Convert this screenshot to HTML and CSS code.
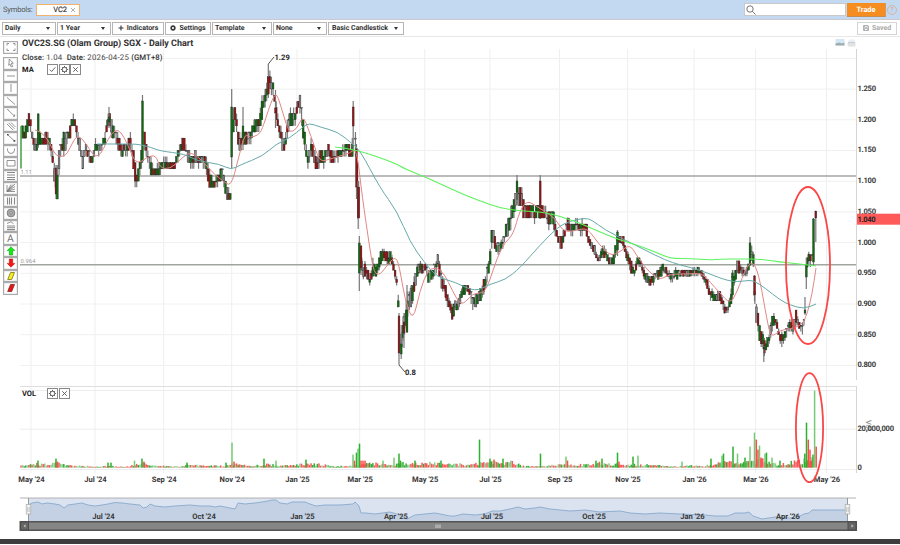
FILE: index.html
```html
<!DOCTYPE html>
<html lang="en">
<head>
<meta charset="utf-8">
<title>OVC2S.SG Daily Chart</title>
<link rel="stylesheet" href="styles.css">
</head>
<body>
<header class="symbols">
  <span class="symbols-label">Symbols:</span>
  <div class="tab">VC2 <svg class="tab-x" viewBox="0 0 6 6"><path d="M1 1l4 4M5 1L1 5"/></svg></div>
  <div class="search"><svg viewBox="0 0 10 10"><circle cx="4" cy="4" r="3.2"/><path d="M6.3 6.3L9.5 9.5"/></svg></div>
  <button class="trade">Trade</button>
  <span class="help">?</span>
</header>
<nav class="toolbar">
  <div class="select w-daily">Daily</div>
  <div class="select w-year">1 Year</div>
  <div class="btn w-ind"><svg class="ico" viewBox="0 0 6 6"><path d="M3 .5v5M.5 3h5"/></svg>Indicators</div>
  <div class="btn w-set"><svg class="ico gear" viewBox="0 0 6 6"><circle cx="3" cy="3" r="1.7"/><path d="M3 0v1M3 5v1M0 3h1M5 3h1M.9.9l.7.7M4.4 4.4l.7.7M5.1.9l-.7.7M1.6 4.4l-.7.7"/></svg>Settings</div>
  <div class="select w-tpl">Template</div>
  <div class="select w-none">None</div>
  <div class="select w-candle">Basic Candlestick</div>
  <div class="btn saved"><svg class="ico disk" viewBox="0 0 6 6"><path d="M.5.5h4.4l.6.6v4.4h-5zM1.5.5v1.8h2.8V.5M1.5 5.5v-2h3v2"/></svg>Saved</div>
</nav>
<main class="workspace">
  <aside class="tools">
    <i class="tool first"><svg viewBox="0 0 12 10"><path d="M2 3.5V1.5h2M8 1.5h2v2M10 6.5v2H8M4 8.5H2v-2"/></svg></i>
    <i class="tool"><svg viewBox="0 0 12 10"><path d="M4.3 1l4 4.2-2 .2L7.6 8.400l-1.300.6L5 6.200 3.800 7.400z"/></svg></i>
    <i class="tool"><svg viewBox="0 0 12 10"><path d="M2 5h8"/></svg></i>
    <i class="tool"><svg viewBox="0 0 12 10"><path d="M6 1v8"/></svg></i>
    <i class="tool"><svg viewBox="0 0 12 10"><path d="M2 1.500l8 7"/></svg></i>
    <i class="tool"><svg viewBox="0 0 12 10"><path d="M2.500 1.500l7 6.500M2.400 1.600h1M9.600 6.500v1.800H8"/></svg></i>
    <i class="tool"><svg viewBox="0 0 12 10"><path d="M2 3l6 6M3.500 1.800l6 6M6 1.500L10.500 6"/></svg></i>
    <i class="tool"><svg viewBox="0 0 12 10"><path d="M2.500 1.500l7 6.500"/><path class="dot" d="M2 1h1.600v1.600H2zM8.500 7h1.800v1.800H8.500z"/></svg></i>
    <i class="tool"><svg viewBox="0 0 12 10"><path d="M2.500 2.500v1.700Q3 7.500 6 7.500T9.500 4.200V2.500"/></svg></i>
    <i class="tool"><svg viewBox="0 0 12 10"><path d="M2 2.500h8v5.500H2z"/></svg></i>
    <i class="tool"><svg viewBox="0 0 12 10"><path class="heavy" d="M2 1.500h8M2 4h8M2 6.500h8M2 8.500h8"/></svg></i>
    <i class="tool"><svg viewBox="0 0 12 10"><path d="M2 8.500L10 1M2 8.500L10 3.500M2 8.500L10 6M2 8.500L6 1.500M2 8.500h8M2 8.500V2M2 8.500L8 1.500"/></svg></i>
    <i class="tool"><svg viewBox="0 0 12 10"><path class="heavy" d="M2.500 1.500v7M4.500 1.500v7M6.500 1.500v7M9.500 1.500v7"/></svg></i>
    <i class="tool"><svg viewBox="0 0 12 10"><circle class="disc" cx="6" cy="5" r="3.900"/><circle class="ring" cx="6" cy="5" r="1.300"/></svg></i>
    <i class="tool"><svg viewBox="0 0 12 10"><path d="M2 2.500L6 .8l2.500 2"/><path class="heavy" d="M2 5h8M2 6.800h8M2 8.600h8"/></svg></i>
    <i class="tool letter">A</i>
    <i class="tool"><svg viewBox="0 0 12 10"><path class="up" d="M6 .8L9.800 4.600H7.700V9H4.300V4.600H2.200z"/></svg></i>
    <i class="tool"><svg viewBox="0 0 12 10"><path class="down" d="M6 9.200L9.800 5.400H7.700V1H4.300V5.400H2.200z"/></svg></i>
    <i class="tool"><svg viewBox="0 0 12 10"><path class="yellow" d="M5.500 1.500h4L6.700 8.500h-4z"/></svg></i>
    <i class="tool"><svg viewBox="0 0 12 10"><path class="red" d="M5.500 1.500h4L6.700 8.500h-4z"/></svg></i>
  </aside>
  <section class="chart">
    <svg id="plot" viewBox="20 36 880 503" width="880" height="503"></svg>
    <div class="legend">
      <h1>OVC2S.SG (Olam Group) SGX - Daily Chart</h1>
      <p class="quote"><b>Close:</b> 1.04 &nbsp;<b>Date:</b> 2026-04-25 <b>(GMT+8)</b></p>
      <div class="study"><span>MA</span>
        <i><svg viewBox="0 0 10 10"><path d="M2 5.200l2 2L8.200 2.500"/></svg></i><i><svg viewBox="0 0 10 10"><circle cx="5" cy="5" r="2.500"/><path d="M5 1v1.500M5 7.500V9M1 5h1.500M7.500 5H9M2.200 2.200l1 1M6.800 6.800l1 1M7.800 2.200l-1 1M3.200 6.800l-1 1"/></svg></i><i><svg viewBox="0 0 10 10"><path d="M2.500 2.500l5 5M7.500 2.500l-5 5"/></svg></i>
      </div>
    </div>
    <div class="study volume"><span>VOL</span>
      <i><svg viewBox="0 0 10 10"><circle cx="5" cy="5" r="2.500"/><path d="M5 1v1.500M5 7.500V9M1 5h1.500M7.500 5H9M2.200 2.200l1 1M6.800 6.800l1 1M7.800 2.200l-1 1M3.200 6.800l-1 1"/></svg></i><i><svg viewBox="0 0 10 10"><path d="M2.500 2.500l5 5M7.500 2.500l-5 5"/></svg></i>
    </div>
  </section>
</main>
<footer class="bottom"></footer>
<script src="chart.js"></script>
</body>
</html>
```
FILE: styles.css
```css
* { box-sizing: border-box; }
body { margin: 0; width: 900px; height: 545px; overflow: hidden; background: #fff; color: #333; font-family: Roboto, "Liberation Sans", sans-serif; font-size: 8px; text-rendering: geometricPrecision; }
svg { fill: none; stroke: currentColor; display: block; }
.symbols { height: 20px; background: #c3d9f1; border-bottom: 1px solid #ccc8cb; display: flex; align-items: center; padding: 0 3px; color: #555; }
.symbols-label { width: 33px; font-size: 7.6px; letter-spacing: -.2px; white-space: nowrap; }
.tab { width: 44px; height: 12px; border: 1px solid #f3b26b; background: #fff; display: flex; align-items: center; justify-content: flex-end; padding-right: 3px; gap: 3px; font-size: 7.5px; color: #333; -webkit-text-stroke: .15px #333; }
.tab-x { width: 6px; height: 6px; color: #999; stroke-width: .8; }
.search { margin-left: auto; width: 102px; height: 13px; background: #fff; border: 1px solid #c9c9c9; padding: 1px; }
.search svg { width: 10px; height: 10px; color: #666; stroke-width: .9; }
.trade { width: 39px; height: 14px; margin-left: 1px; border: 0; padding: 0; background: #f68d20; color: #fff; font: bold 7.4px Roboto, sans-serif; border-bottom: 1px solid #c98c50; border-right: 1px solid #d49a60; text-rendering: geometricPrecision; }
.help { width: 10px; height: 10px; border: 1px solid #d6b79d; border-radius: 50%; margin-left: 1px; color: #cfae94; font-size: 7px; line-height: 8px; text-align: center; }
.toolbar { height: 17px; border-bottom: 1px solid #e8e8e8; display: flex; align-items: center; gap: 1px; padding: 0 3px 0 2px; font-weight: bold; font-size: 7px; color: #333; }
.select, .btn { height: 13px; border: 1px solid #b5b5b5; background: #fff; display: flex; align-items: center; white-space: nowrap; }
.select { justify-content: space-between; padding: 0 5px 0 2px; }
.select::after { content: ""; border: 2.3px solid transparent; border-top: 3px solid #333; border-bottom: 0; }
.btn { justify-content: center; gap: 3px; }
.ico { width: 6px; height: 6px; stroke-width: 1.1; }
.gear { stroke-width: 1.2; }
.disk { stroke-width: .9; }
.w-daily { width: 54px; }
.w-year { width: 54px; }
.w-ind { width: 52px; }
.w-set { width: 46px; }
.w-tpl { width: 60px; }
.w-none { width: 54px; }
.w-candle { width: 76px; padding-left: 3px; }
.saved { margin-left: auto; width: 40px; border-color: #d5d5d5; color: #aaa; }
.workspace { display: grid; grid-template-columns: 20px 880px; height: 502px; }
.tools { padding: 4px 0 0 3px; display: flex; flex-direction: column; color: #777; }
.tool { flex: none; width: 15px; height: 12.5px; border: 1px solid #aaa; padding: .5px; background: #fff; display: flex; justify-content: center; align-items: center; box-shadow: inset 0 0 0 .5px #ddd; }
.tool svg { width: 12px; height: 10px; stroke-width: .8; }
.first { margin-bottom: 3.5px; }
.heavy { stroke-width: 1.1; stroke: #888; }
.dot { fill: #555; stroke: none; }
.disc { fill: #aaa; }
.ring { fill: #ddd; }
.letter { font: normal 10.5px/11px Roboto, sans-serif; }
.up { fill: #0df20d; stroke: #177b17; stroke-width: .5; }
.down { fill: #f11; stroke: #911; stroke-width: .5; }
.yellow { fill: #f6ee22; stroke: #77731c; }
.red { fill: #e51616; stroke: #872525; }
.chart { position: relative; height: 502px; }
#plot { margin-top: -1px; stroke: none; overflow: visible; }
.legend { position: absolute; left: 2px; top: 1px; }
h1 { margin: 0; font-size: 9px; line-height: 13px; font-weight: bold; white-space: nowrap; color: #333; }
.quote { margin: 1.5px 0 0; font-size: 7.8px; line-height: 10px; color: #444; white-space: nowrap; letter-spacing: .24px; }
.quote b { font-weight: 500; letter-spacing: .05px; color: #333; }
.study { display: flex; align-items: center; height: 11px; margin-top: 1.5px; font-weight: bold; font-size: 7.5px; color: #222; }
.study span { width: 25px; }
.study i { width: 11px; height: 11px; border: 1px solid #888; margin-right: .5px; background: #fff; color: #555; }
.study svg { width: 9px; height: 9px; stroke-width: 1; }
.volume { position: absolute; left: 2px; top: 349.5px; }
.axis { font: bold 7.6px Roboto, sans-serif; fill: #383838; }
.level { font: 5.8px Roboto, sans-serif; fill: #999; }
.callout { font: bold 7.6px Roboto, sans-serif; fill: #222; }
.voltitle { font: 7.5px Roboto, sans-serif; fill: #888; }
.bottom { height: 5px; background: #3d3d3d; position: relative; }
```
FILE: chart.js
```js
const out = [];
const put = s => out.push(s);
const line = (x1, y1, x2, y2, c, w = 1) =>
  put(`<line x1="${x1}" y1="${y1}" x2="${x2}" y2="${y2}" stroke="${c}" stroke-width="${w}"/>`);
const rect = (x, y, w, h, c, extra = '') =>
  put(`<rect x="${x}" y="${y}" width="${w}" height="${h}" fill="${c}" ${extra}/>`);
const text = (x, y, s, cls, anchor = 'start', len = 0) =>
  put(`<text x="${x}" y="${y}" class="${cls}" text-anchor="${anchor}"${len ? ` textLength="${len}"` : ''}>${s}</text>`);
const pairs = s => s.split(' ').map(p => p.split(',').map(Number));
let seed = 4711;
const rnd = () => (seed = (seed * 16807) % 2147483647) / 2147483647;
function at(list, x, k) {
  for (let i = 1; i < list.length; i++) {
    if (x <= list[i][0]) {
      const a = list[i - 1], b = list[i];
      return a[k] + (b[k] - a[k]) * (x - a[0]) / ((b[0] - a[0]) || 1);
    }
  }
  return list[list.length - 1][k];
}

// grid
const months = [[31, "May '24"], [95, "Jul '24"], [163.7, "Sep '24"], [231.7, "Nov '24"], [297, "Jan '25"], [359.7, "Mar '25"], [424.7, "May '25"], [490, "Jul '25"], [559.5, "Sep '25"], [627.5, "Nov '25"], [694, "Jan '26"], [755.5, "Mar '26"], [826.5, "May '26"]];
months.forEach(([x]) => line(x, 49, x, 473, '#efefef'));
for (let i = 0; i <= 10; i++) line(20, 58.4 + i * 30.7, 856, 58.4 + i * 30.7, '#f0f0f0');
[390.5, 429.2, 469.5].forEach(y => line(20, y, 856, y, '#ededed'));
line(20, 386.5, 856, 386.5, '#dedede');
line(856.5, 49, 856.5, 380, '#d5d5d5');
line(856.5, 386, 856.5, 473, '#d5d5d5');

// horizontal levels
line(20, 176, 856, 176, '#a5a5a5', 1.5);
line(20, 264.7, 856, 264.7, '#a0a5a0', 1.5);
text(20.5, 174.2, '1.11', 'level');
text(20.5, 263, '0.964', 'level', 'start', 15);

// moving range of the candles: x, high, low
const range = pairs('22,126,143 25,125,144 27,113,138 29,113,128 31,113,133 33,138,150 37,138,150 40,125,144 42,138,148 46,130,147 50,135,150 52,145,165 54,160,178 56,175,199 58,150,190 60,145,165 62,135,155 65,130,156 68,131,140 70,122,138 73,113,127 75,118,132 78,132,148 81,145,158 83,155,169 86,144,155 90,150,163 92,157,168 95,138,152 98,142,156 101,143,153 104,135,148 107,120,135 109,107,125 111,120,137 115,125,142 118,133,150 122,143,155 126,143,155 130,132,153 133,145,165 135,155,186 137,173,187 139,165,178 141,155,178 143,118,160 144,130,147 147,145,160 150,155,173 152,163,180 155,166,180 160,160,175 165,155,170 170,160,172 175,158,170 180,143,156 184,138,150 188,150,164 192,153,168 195,150,168 200,155,168 205,155,167 209,162,188 211,175,193 215,178,190 220,170,185 222,168,182 225,177,195 228,188,202 231,190,205 232,108,150 234,107,130 236,105,128 238,128,148 241,138,155 243,125,150 246,130,146 250,130,146 254,120,136 258,118,135 260,110,132 262,95,122 265,90,108 267,78,100 269,68,87 271,76,96 273,80,95 275,90,108 277,110,128 279,120,136 282,130,148 285,140,155 287,118,140 290,108,130 292,107,126 295,110,126 297,98,116 299,94,112 301,98,125 303,115,140 306,138,162 308,153,173 311,140,158 313,142,165 316,155,169 318,153,173 320,150,165 324,153,166 328,141,157 332,150,166 336,150,163 340,149,160 344,142,156 348,142,156 352,150,162 353,104,145 355,120,152 357,147,190 358.700,180,225 359.500,240,280 361,245,272 363,267,282 365,260,280 368,266,282 370,273,288 373,258,280 376,265,280 379,255,271 382,246,263 385,246,262 388,251,267 391,249,260 393,258,272 396,272,285 397.800,280,289 399,316,352 401,332,356 403,313,345 405,310,342 407,287,325 409,286,310 412,284,310 415,268,290 418,262,276 421,260,275 424,263,275 426,258,272 428,268,284 432,268,281 436,260,275 438,253,266 441,268,289 445,283,297 448,293,310 452,304,321 455,299,313 458,299,311 461,287,303 464,284,298 467,281,293 470,286,299 473,297,311 478,290,305 482,285,300 485,275,291 488,260,280 490,250,272 492,220,252 494,228,246 497,243,258 501,239,252 505,230,245 509,210,236 512,205,226 515,193,216 517,177,205 519,188,206 521,185,206 524,198,220 528,204,222 532,203,217 535,207,225 538,204,216 541,203,218 544,204,220 548,212,230 551,208,224 554,212,231 558,233,246 562,235,247 565,223,240 568,217,231 572,223,236 576,219,231 580,221,236 584,219,232 587,223,238 590,238,250 594,244,256 599,257,265 602,243,257 606,249,259 609,255,267 613,256,266 616,240,258 618,231,246 620,235,246 623,235,248 626,246,260 630,256,271 634,268,277 638,254,267 641,257,270 645,269,286 648,275,287 652,275,287 656,269,281 660,266,280 663,263,273 667,268,277 672,272,284 676,268,280 680,269,278 700,267,277 705,273,284 710,287,302 715,292,302 720,291,301 725,303,315 728,305,316 731,288,308 733,270,292 736,266,280 738,257,274 742,265,276 746,268,280 749,259,272 750,240,265 753,244,262 754.500,276,300 756,296,324 758,308,332 760,325,350 763,330,347 764,335,360 767,336,350 770,328,342 772,313,333 775,314,326 778,321,336 780,332,346 783,330,346 786,327,342 789,314,334 793,322,336 796,308,326 799,318,331 802,323,336 804,314,330 805,305,315 806.500,258,276 808,250,266 811,254,266 812.900,252,266');
const GREEN = '#0a6e0a', RED = '#9c1010';
function candle(x, high, low, top, bottom, color) {
  line(x, high, x, low, '#777', 1.2);
  rect(x - 0.9, top, 1.8, Math.max(bottom - top, 0.9), color, 'stroke="#2c2c2c" stroke-width=".4"');
}
const step = 1.585;
for (let x = 22.6; x < 813.2; x += step) {
  const near = [[56, 57.5], [141.8, 143.3], [231, 232.5], [352.5, 354], [358.8, 360.2], [398.3, 400], [805.2, 806.8]].some(([a, b]) => x > a && x < b);
  if (near) continue;
  const hi = at(range, x, 1), lo = at(range, x, 2);
  const q = (hi + lo) / 2 < 242 ? 6.14 : 3.07;
  const snap = v => 365.300 - Math.round((365.300 - v) / q) * q;
  const trend = (at(range, x + 2, 1) + at(range, x + 2, 2) - at(range, x - 2, 1) - at(range, x - 2, 2)) / 2;
  const span = lo - hi;
  const a = snap(hi + span * (0.08 + rnd() * 0.36)), b = snap(hi + span * (0.56 + rnd() * 0.36));
  const down = rnd() < (trend > 3 ? 0.78 : trend < -3 ? 0.2 : 0.5);
  const dull = rnd() < 0.27;
  const up = snap(hi + rnd() * span * 0.3), dn = snap(lo - rnd() * span * 0.3);
  candle(x, Math.min(up, a), Math.max(dn, b), Math.min(a, b), dull && rnd() < 0.4 ? Math.min(a, b) + 1 : Math.max(a, b), dull ? '#8a8a8a' : down ? RED : GREEN);
}
// long sessions
line(21, 126, 21, 168.5, '#3fa23f', 1.5);
[[56, 165, 199, 168, 194, 0], [57.300, 165, 199, 175, 199, 1], [38.200, 113, 148, 114, 145, 1], [109, 107, 128, 117, 122, 1], [142.500, 95, 163, 101, 161, 1], [231.700, 89, 168, 107, 157, 1], [243, 107, 150, 126, 140, 1], [268.300, 64, 98, 77, 94, 0], [275.500, 90, 128, 108, 113, 0], [353.200, 101, 150, 107, 126, 0], [356.500, 144, 199, 149, 187, 0], [358.200, 181, 229, 187, 218, 0], [359.300, 236, 291, 243, 273, 1], [361, 245, 275, 246, 268, 0], [399, 313, 365, 316, 353, 0], [401.200, 325, 359, 344, 354, 1], [404, 313, 348, 322, 333, 0], [407, 285, 333, 310, 332, 1], [517, 175, 205, 181, 192, 1], [540.200, 175, 219, 181, 218, 0], [617.500, 230, 256, 232, 250, 1], [732.500, 270, 300, 273, 295, 1], [750, 237, 266, 243, 265, 1], [754.500, 275, 301, 276, 295, 0], [763.800, 346, 362, 347, 349, 1], [805, 297, 315, 310, 313, 1], [806.300, 258, 289, 265, 277, 1], [813.500, 218, 266, 219, 262, 1], [815.800, 211, 242, 211, 218, 0]]
  .forEach(([x, h, l, t, b, c]) => candle(x, h, l, t, b, c ? GREEN : RED));

// averages
function curve(s, color, w) {
  const p = pairs(s);
  let d = `M${p[0]}`;
  for (let i = 1; i < p.length - 1; i++) d += `Q${p[i]} ${(p[i][0] + p[i + 1][0]) / 2},${(p[i][1] + p[i + 1][1]) / 2}`;
  d += `L${p[p.length - 1]}`;
  put(`<path d="${d}" fill="none" stroke="${color}" stroke-width="${w}"/>`);
}
curve('35,130 40,131 48,140 52,148 56,156 65,157 70,148 76,136 82,138 90,150 95,157 101,154 106,143 112,133 118,129 124,137 130,150 135,162 141,162 147,157 156,155 160,168 170,169 180,160 188,153 195,154 205,164 215,175 222,180 231,187 238,160 245,133 250,138 258,135 262,130 270,105 274,96 277,94 282,110 288,130 292,132 297,128 303,116 308,128 314,145 320,162 330,159 340,156 350,153 355,149 358,160 362,195 370,250 374,273 380,275 388,264 396,256 400,270 405,300 413,322 420,290 428,270 437,267 445,275 452,290 461,306 470,297 475,293 484,293 490,280 497,258 505,242 513,235 520,210 527,201 535,205 545,212 555,218 562,230 570,232 580,229 588,229 598,243 610,256 620,252 630,244 638,258 650,273 660,280 670,274 690,274 702,273 710,282 720,293 730,304 737,292 747,265 754,262 760,280 767,320 771,338 780,330 790,329 800,326 806,318 812,295 816,268', '#e08787', 1);
curve('97,144 120,144 137,144 145,146 150,147 160,151 185,154 197,161 220,164 231,170 240,165 263,156 276,144 290,138 303,127 309,123 320,127 338,132 350,142 360,150 380,188 397,211 410,242 424,262 437,277 455,282 475,292 490,284 505,280 520,268 540,245 558,227 570,221 585,218 592,220 605,230 625,240 645,250 665,260 680,265 700,270 730,282 745,281 753,280 765,288 780,300 790,305 804,309 816,304', '#67aaaa', 1);
curve('335,147 355,149 395,163 405,169 430,179 460,193 480,201 500,208 520,211 545,212 575,221 600,232 617,239 640,246 660,254 671,258.500 690,258.500 710,260 720,259 740,259 760,259 780,262 800,264 816,266', '#5df35d', 1.1);

// callouts
put('<path d="M268.300 64L274 57M399 365l6 7" stroke="#555" fill="none"/>');
text(274.5, 59.5, '1.29', 'callout');
text(405, 375, '0.8', 'callout');

// volume
const base = pairs('20,3 38,4 48,3.500 56,5 62,3 75,2 100,1 110,2.500 115,1 128,1 134,3 142,5 152,2 165,1.500 180,1 190,3 205,2 225,2 235,4 250,2 265,3.500 280,2 300,4 322,3.500 335,1 350,2 368,4 380,4 390,2 400,5 410,4 430,4.500 450,4.500 465,3 480,4 495,7 515,5 525,1.500 550,2 560,3 580,3 597,5 610,4 625,3 645,3 660,2 670,1 690,2 705,1.500 720,6 745,5 760,10 770,5 780,3 790,5 805,8 813,9');
const bar = (x, h, c) => rect(x - 0.75, 467.600 - h, 1.5, h, c);
for (let x = 21; x < 813; x += step) {
  const h = Math.max(0.7, at(base, x, 1) * (0.45 + rnd() * 0.85));
  const r = rnd();
  bar(x, h, r < 0.4 ? '#f65a5a' : r < 0.72 ? '#36ac36' : '#8ccc8c');
}
pairs('38,7,0 56,9,0 57.500,6,1 108,5,0 111,5,0 134.500,7,2 142,9,0 144,6,1 187,5,0 226,5,0 232,25,2 234,6,1 264,9,0 276,7,2 306,8,0 353,13,2 354.500,7,1 356.500,15,0 358,19,2 359.500,24,0 361,7,1 363,7,1 365,7,1 383,7,2 394,10,2 399,14,0 400.500,7,0 415,7,0 441,7,0 479.500,28,0 490,9,0 494,8,1 503,9,0 540.500,14,0 566,11,2 567.500,7,1 596,7,0 602,9,0 617.500,15,0 619,6,1 633,11,0 638,12,2 682,6,2 711,9,0 722,12,2 723.500,14,0 733,21,0 737.500,14,2 745,10,0 750,21,2 754.500,35,2 756.300,28,1 758,18,1 759.500,22,2 761,10,1 765,14,2 766.500,15,0 772,10,2 780,7,0 804.800,14,0 806.500,45,0 808.300,28,1 810,18,1 811.500,7,1 813,13,0 814.600,77,2 816.200,21,1')
  .forEach(([x, h, c]) => bar(x, h, ['#2bb12b', '#fb4c4c', '#75cb75'][c]));

// axes
put('<text class="voltitle" transform="translate(865.500 420) rotate(90)">Vol</text>');
['1.250', '1.200', '1.150', '1.100', '1.050', '1.000', '0.950', '0.900', '0.850', '0.800']
  .forEach((s, i) => text(857.5, 91 + i * 30.7, s, 'axis', 'start', 18.500));
rect(857, 213.700, 43, 11, '#ff5a5a');
text(857.5, 222, '1.040', 'callout', 'start', 18);
text(857.5, 431.200, '20,000,000', 'axis', 'start', 36.500);
text(857.5, 470, '0', 'axis');
months.forEach(([x, s]) => text(x + 0.5, 482, s, 'axis', 'middle'));

// navigator
const nav = '28,505 32,503 38,502 42,504 47,503 55,504 60,505 64,508 68,505 75,504 82,503 88,505 95,506 102,505 108,504 115,502.500 122,503 130,504 140,505 143,508 147,507 150,504 155,506 165,507 175,506 190,505 200,506 210,506 215,507 220,506 235,509 238,503 245,504 255,503 262,502 268,501 272,500 276,500 280,503 287,504 292,502 305,502 310,504 316,506 325,505 340,505 353,504 355,502 359,506 361,513 366,513 375,514 390,512 400,515 407,519 415,515 425,514 435,513 450,516 455,516 463,514 475,515 485,514 492,511 500,511 510,509 518,507 525,509 535,508 540,507 550,509 570,511 585,510 600,512 620,511 630,513 645,514 660,513 680,514 705,515 715,516 728,516 735,513 745,513 749,512 753,516 762,519 775,517 790,518 800,516 804,514 809,513 812,510 847,510';
rect(28.5, 498, 819, 23.5, '#dae3ef');
put(`<path d="M28,521 L${nav.replaceAll(' ', ' L')} L847,521Z" fill="#c4d1e4"/>`);
put(`<polyline points="${nav}" fill="none" stroke="#88a9cd" stroke-width=".9"/>`);
line(20, 498, 856, 498, '#b2b2b2');
[28.5, 847.5].forEach(x => {
  line(x, 498, x, 521, '#999');
  rect(x - 2.3, 504.500, 4.6, 9.500, '#f2f2f2', 'stroke="#aaa" stroke-width=".7"');
  line(x - 0.8, 507, x - 0.8, 512, '#aaa', 0.6);
  line(x + 0.8, 507, x + 0.8, 512, '#aaa', 0.6);
});
[[103.5, "Jul '24"], [204, "Oct '24"], [302.5, "Jan '25"], [396, "Apr '25"], [492, "Jul '25"], [594, "Oct '25"], [692.5, "Jan '26"], [788, "Apr '26"]]
  .forEach(([x, s]) => text(x, 519.300, s, 'axis', 'middle'));
rect(20, 521.500, 836.5, 9, '#858585', 'stroke="#555" stroke-width="1"');
line(20, 522, 856.5, 522, '#555', 1.2);
line(20, 530, 856.5, 530, '#555', 1.2);
rect(20.5, 522, 8, 8, '#666', 'stroke="#4c4c4c"');
rect(848, 522, 8, 8, '#666', 'stroke="#4c4c4c"');
put('<path d="M25.500 524.500v3l-2-1.500zM851.500 524.500v3l2-1.500z" fill="#ccc"/>');
[436, 438, 440].forEach(x => line(x, 524.500, x, 528, '#ccc', 1.100));

// marked zones
put('<ellipse cx="808" cy="265.500" rx="22" ry="78.500" fill="none" stroke="#fa4747" stroke-width="1.800"/>');
put('<ellipse cx="809.500" cy="427.700" rx="13.600" ry="54.500" fill="none" stroke="#fa4747" stroke-width="1.800"/>');

// export and print
put('<rect x="835.500" y="39" width="9" height="6.500" fill="#d5e7f5"/><path d="M835.500 45.500v-2l4-1 2 1 3-1v3z" fill="#9fadb3"/>');
put('<path d="M849 39.500h5l1 2.500h-7z" fill="#eee"/><rect x="847.500" y="42" width="8" height="4.500" rx="1.500" fill="#e2e2e2"/><path d="M848 42.500h7" stroke="#bfd0e0"/>');
document.getElementById('plot').innerHTML = out.join('');
```
